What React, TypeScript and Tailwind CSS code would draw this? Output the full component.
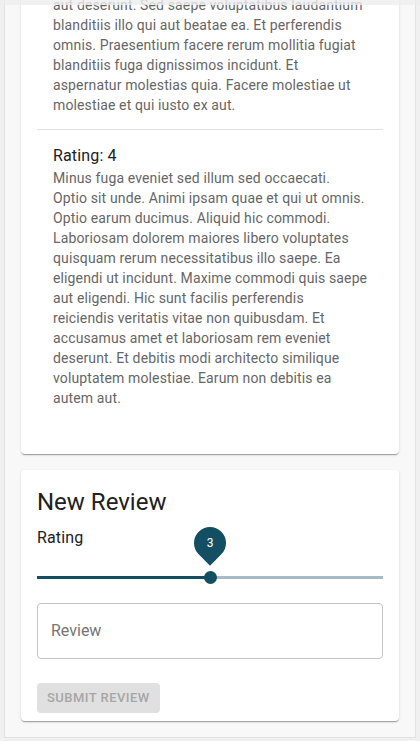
import React from 'react';

const font = { fontFamily: 'Roboto, "Noto Sans", sans-serif' };

type Review = { rating: number; lines: string[] };

// Lines are kept as they wrap in the layout.
const reviews: Review[] = [
  {
    rating: 5,
    lines: [
      'Et qui ut eos dolores.',
      'aut deserunt. Sed saepe voluptatibus laudantium',
      'blanditiis illo qui aut beatae ea. Et perferendis',
      'omnis. Praesentium facere rerum mollitia fugiat',
      'blanditiis fuga dignissimos incidunt. Et',
      'aspernatur molestias quia. Facere molestiae ut',
      'molestiae et qui iusto ex aut.',
    ],
  },
  {
    rating: 4,
    lines: [
      'Minus fuga eveniet sed illum sed occaecati.',
      'Optio sit unde. Animi ipsam quae et qui ut omnis.',
      'Optio earum ducimus. Aliquid hic commodi.',
      'Laboriosam dolorem maiores libero voluptates',
      'quisquam rerum necessitatibus illo saepe. Ea',
      'eligendi ut incidunt. Maxime commodi quis saepe',
      'aut eligendi. Hic sunt facilis perferendis',
      'reiciendis veritatis vitae non quibusdam. Et',
      'accusamus amet et laboriosam rem eveniet',
      'deserunt. Et debitis modi architecto similique',
      'voluptatem molestiae. Earum non debitis ea',
      'autem aut.',
    ],
  },
];

const cardShadow =
  'shadow-[0_2px_1px_-1px_rgba(0,0,0,0.2),0_1px_1px_0_rgba(0,0,0,0.14),0_1px_3px_0_rgba(0,0,0,0.12)]';

function ReviewList() {
  return (
    <div className={`rounded bg-white ${cardShadow}`}>
      <div className="px-4 pt-4 pb-6">
        <ul className="py-2">
          {reviews.map((r, i) => (
            <li
              key={i}
              className={`px-4 py-2 ${i < reviews.length - 1 ? 'border-b border-[#e0e0e0]' : ''}`}
            >
              <div className="my-1.5">
                <div className="text-base leading-6 tracking-[0.15px] text-[#212121]">Rating: {r.rating}</div>
                <p className="text-sm leading-5 tracking-[0.13px] text-[#666666]">
                  {r.lines.map((l, j) => (
                    <span key={j} className="block whitespace-nowrap">
                      {l}
                    </span>
                  ))}
                </p>
              </div>
            </li>
          ))}
        </ul>
      </div>
    </div>
  );
}

function RatingSlider({ value, min, max }: { value: number; min: number; max: number }) {
  const pct = ((value - min) / (max - min)) * 100;
  return (
    <div className="relative mt-[21px] h-3">
      {/* rail */}
      <div className="absolute left-0 right-0 top-[4.5px] h-[3px] bg-[#a7bbc5]" />
      {/* track */}
      <div className="absolute left-0 top-[4.5px] h-[3px] bg-[#134e62]" style={{ width: `${pct}%` }} />
      {/* thumb + label */}
      <div className="absolute top-0 -ml-[6.5px] h-[13px] w-[13px] rounded-full bg-[#134e62]" style={{ left: `${pct}%` }}>
        <div className="absolute left-[-9.5px] top-[-44px] flex h-8 w-8 items-center justify-center">
          <div className="absolute inset-0 rotate-[-45deg] rounded-[50%_50%_50%_0] bg-[#134e62]" />
          <span className="relative text-xs text-white">{value}</span>
        </div>
      </div>
    </div>
  );
}

function NewReview() {
  return (
    <div className={`rounded bg-white px-4 pt-4 pb-2 ${cardShadow}`}>
      <h5 className="mb-[8px] text-2xl leading-8 text-[#212121]">New Review</h5>
      <div className="text-base leading-6 tracking-[0.15px] text-[#212121]">Rating</div>
      <RatingSlider value={3} min={1} max={5} />
      <div className="mt-5 flex h-14 items-center rounded border border-[#c4c4c4] px-[13px]">
        <span className="text-base text-[#757575]">Review</span>
      </div>
      <button
        disabled
        className="mt-6 h-[30px] rounded bg-[#e0e0e0] px-2.5 text-[13px] font-medium uppercase tracking-[0.46px] text-[#a6a6a6]"
      >
        Submit Review
      </button>
    </div>
  );
}

export default function App() {
  return (
    <div className="relative h-[741px] w-[420px] overflow-hidden bg-[#f0f0f0]" style={font}>
      <div className="-mt-[104px]">
        <div className="mx-1 flex flex-col gap-4 border border-[#e2e2e2] bg-[#f8f8f8] p-4">
          <ReviewList />
          <NewReview />
        </div>
      </div>
      <div className="absolute left-0 right-0 top-0 h-[5px] bg-[#ededed]/80" />
    </div>
  );
}
